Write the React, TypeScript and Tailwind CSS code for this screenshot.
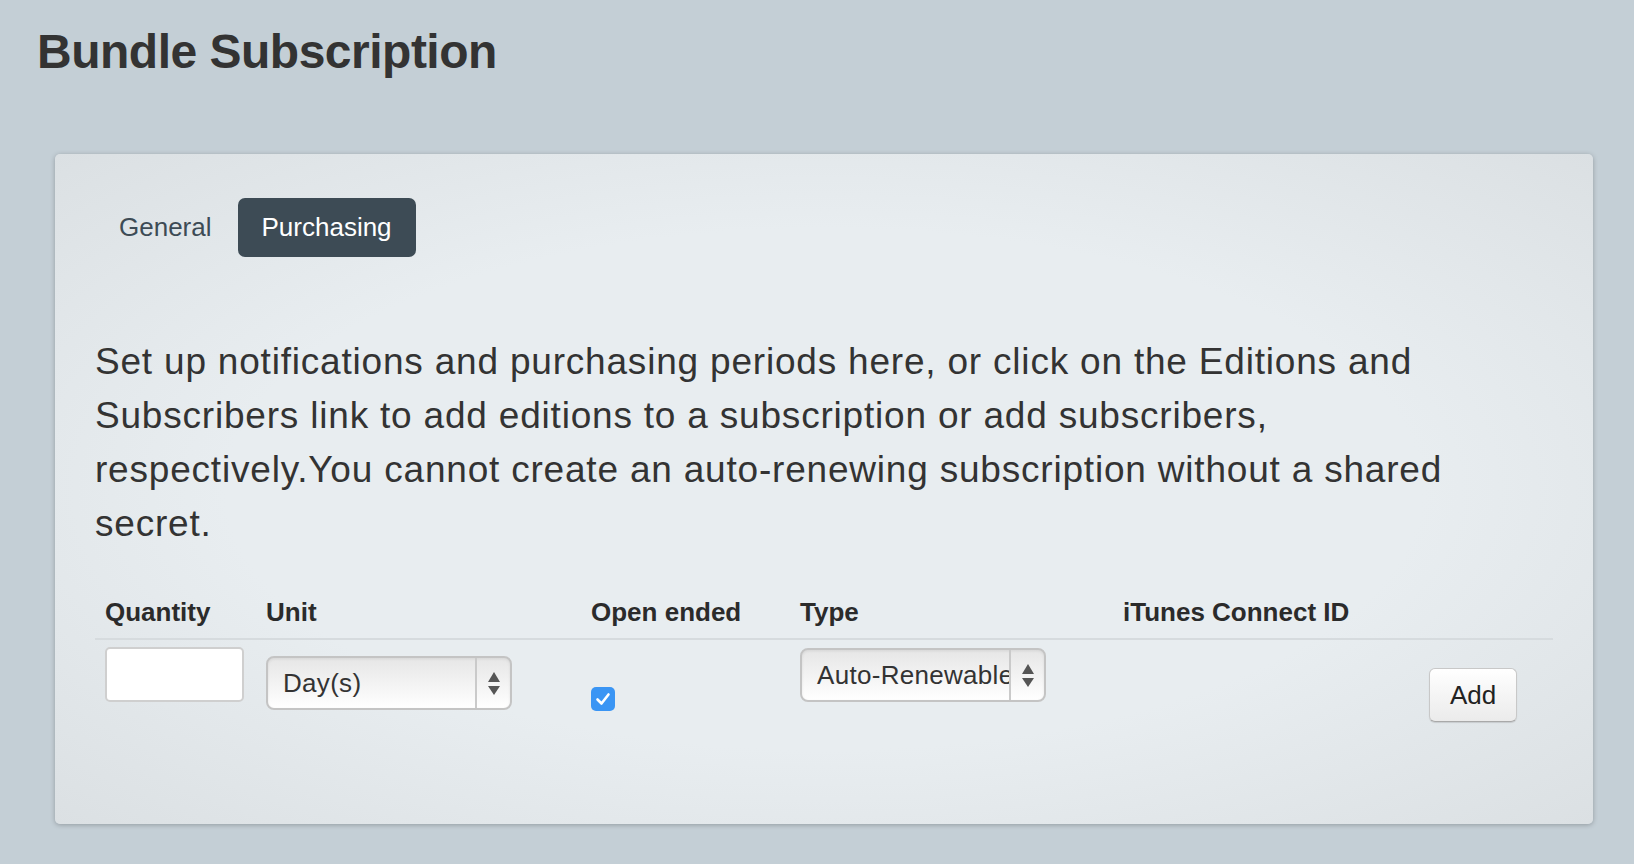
import React from 'react';

function SelectBox({ value }: { value: string }) {
  return (
    <div className="flex h-[54px] w-[246px] overflow-hidden rounded-[8px] border-2 border-[#c4c4c4] bg-gradient-to-b from-[#e6e6e6] to-white shadow-[inset_0_1px_3px_rgba(0,0,0,0.08)]">
      <div className="flex min-w-0 flex-1 items-center overflow-hidden whitespace-nowrap pl-[15px] pr-[8px] text-[26px] tracking-[0.3px] text-[#333]">
        {value}
      </div>
      <div className="flex w-[35px] flex-col items-center justify-center gap-[4px] border-l-2 border-[#cacaca]">
        <svg width="12" height="10" viewBox="0 0 12 10">
          <path d="M6 0 L12 10 L0 10 Z" fill="#555" />
        </svg>
        <svg width="12" height="9" viewBox="0 0 12 9">
          <path d="M0 0 L12 0 L6 9 Z" fill="#555" />
        </svg>
      </div>
    </div>
  );
}

export default function App() {
  return (
    <div className="min-h-screen bg-[#c4cfd6] pl-[37px] pr-[41px] pt-[28px] pb-[40px] font-['Liberation_Sans',Arial,sans-serif] text-[#333]">
      <h1 className="text-[48px] font-bold leading-none tracking-[-0.5px] text-[#333]">Bundle Subscription</h1>

      <div className="ml-[18px] mt-[78px] rounded-[5px] bg-[radial-gradient(ellipse_at_center,#e8edf0_55%,#dbe0e3_100%)] px-[40px] pt-[44px] pb-[102px] shadow-[0_1px_5px_rgba(0,0,0,0.25)]">
        <div className="flex gap-[2px]">
          <button className="flex h-[59px] items-center rounded-[7px] px-[24px] text-[26px] text-[#3d4b55]">General</button>
          <button className="flex h-[59px] items-center rounded-[7px] bg-[#3d4b55] px-[24px] text-[26px] text-white">Purchasing</button>
        </div>

        <p className="mt-[78px] max-w-[1390px] text-[37px] leading-[54px] tracking-[0.8px] text-[#333]">
          Set up notifications and purchasing periods here, or click on the Editions and Subscribers link to add editions to a subscription or add subscribers, respectively.You cannot create an auto-renewing subscription without a shared secret.
        </p>

        <div className="mt-[46px] grid grid-cols-[161px_325px_209px_323px_306px_1fr] border-b-2 border-[#d6dbde] px-[10px] pb-[10px] text-[26px] font-bold leading-[31px] text-[#2b2b2b]">
          <div>Quantity</div>
          <div>Unit</div>
          <div>Open ended</div>
          <div>Type</div>
          <div>iTunes Connect ID</div>
          <div></div>
        </div>

        <div className="grid grid-cols-[161px_325px_209px_323px_306px_1fr] items-start px-[10px]">
          <div className="mt-[7px]">
            <input className="h-[55px] w-[139px] rounded-[5px] border-2 border-[#cfcfcf] bg-white px-2 text-[26px] outline-none" />
          </div>
          <div className="mt-[16px]">
            <SelectBox value="Day(s)" />
          </div>
          <div className="mt-[47px]">
            <div className="flex h-[24px] w-[24px] items-center justify-center rounded-[5px] bg-[#3a95f4]">
              <svg width="16" height="14" viewBox="0 0 16 14">
                <path d="M2.5 7.5 L6.5 11.5 L13.5 2.5" fill="none" stroke="white" strokeWidth="2.6" strokeLinecap="round" strokeLinejoin="round" />
              </svg>
            </div>
          </div>
          <div className="mt-[8px]">
            <SelectBox value="Auto-Renewable" />
          </div>
          <div></div>
          <div className="mt-[28px]">
            <button className="h-[54px] rounded-[6px] border border-[#c8c8c8] border-b-[#a9a9a9] bg-gradient-to-b from-white to-[#ebebeb] px-[20px] text-[26px] text-[#222] shadow-[0_1px_1px_rgba(0,0,0,0.12)]">
              Add
            </button>
          </div>
        </div>
      </div>
    </div>
  );
}
